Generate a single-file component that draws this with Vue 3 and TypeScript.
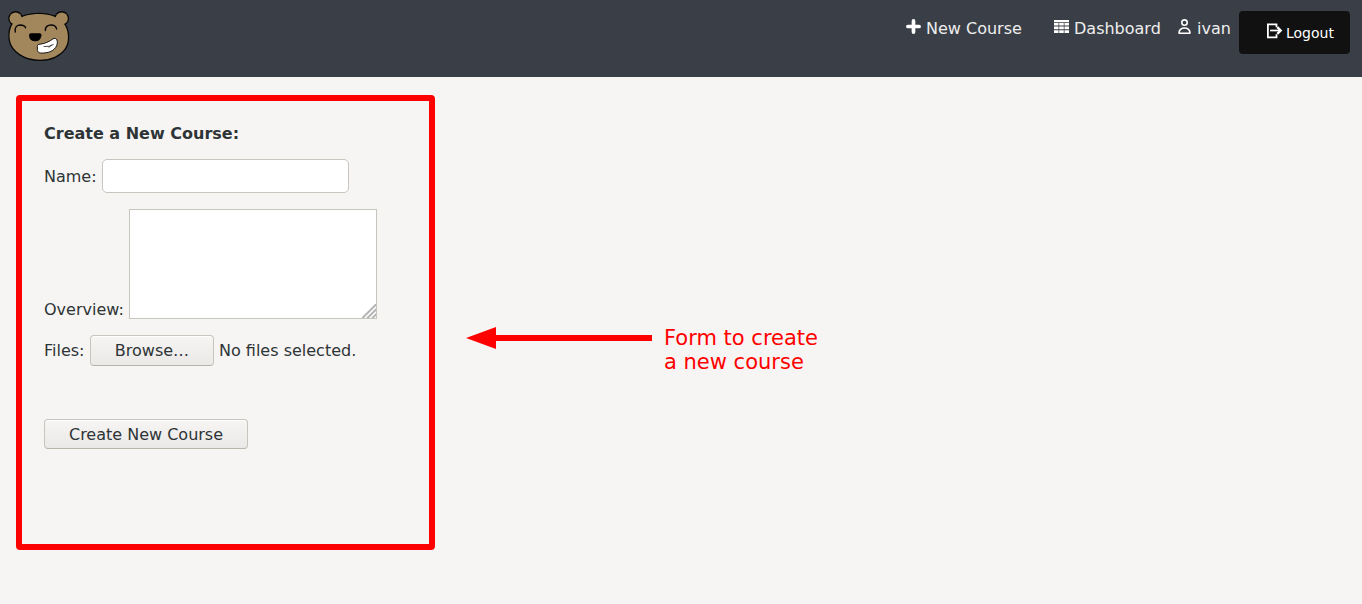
<script setup lang="ts">
import { ref } from 'vue'

const name = ref<string>('')
const overview = ref<string>('')
</script>

<template>
  <div class="page">
    <header class="bar">
      <svg class="logo" width="66" height="54" viewBox="0 0 66 54">
        <g fill="none" stroke="#080808" stroke-width="2.600">
          <circle cx="9.600" cy="10.500" r="6.100" />
          <circle cx="55.700" cy="10.500" r="6.100" />
          <path transform="translate(1.200 0)" d="M32.500 6C43 6 53 9.800 57.500 17C60 21 61.200 26 60.600 32C59.500 44 47 51.700 33 51.700C18 51.700 4 43.500 2.600 31C1.700 24 3.500 17.500 7.500 13.500C13 8.400 22 6 32.500 6Z" />
        </g>
        <g fill="#a3875c">
          <circle cx="9.600" cy="10.500" r="6.100" />
          <circle cx="55.700" cy="10.500" r="6.100" />
          <path transform="translate(1.200 0)" d="M32.500 6C43 6 53 9.800 57.500 17C60 21 61.200 26 60.600 32C59.500 44 47 51.700 33 51.700C18 51.700 4 43.500 2.600 31C1.700 24 3.500 17.500 7.500 13.500C13 8.400 22 6 32.500 6Z" />
        </g>
        <g transform="translate(1.600 0)">
          <g fill="none" stroke="#080808" stroke-width="1.400" stroke-linecap="round">
            <path d="M7.700 24C6.700 19 9.500 17 12.700 17C15.500 17.100 17.500 18 18 19.800" />
            <path d="M37.800 22.500C37.500 18.800 40 17 43.500 17C46.500 17 48.500 18.200 49 21" />
          </g>
          <path d="M21.400 27Q21.500 25.300 23.200 25.300H32Q34 25.300 33.900 27.200Q33 33.300 27.800 33.300Q21.600 33.300 21.400 27Z" fill="#000" />
          <path d="M31.500 36.300C37 35.800 42 33.500 45.500 30.800C48.500 29.500 50.200 31.500 49.600 36C48.500 41 43.500 44.800 36 45C31 45.500 29.500 44 29.800 40C29.500 37.500 30 36.400 31.500 36.300Z" fill="#fff" stroke="#111" stroke-width="1" />
          <path d="M36 38.500L41.500 38.300L46 36.400M41 39.500L44 37" fill="none" stroke="#222" stroke-width=".8" />
        </g>
      </svg>
      <nav class="links">
        <a class="link course">
          <svg class="icon" width="15" height="15" viewBox="0 0 15 15">
            <path d="M7.500 1.900V13.100M1.900 7.500H13.100" stroke="#fff" stroke-width="3.700" stroke-linecap="round" />
          </svg>
          <span>New Course</span>
        </a>
        <a class="link dashboard">
          <svg class="icon" width="15" height="15" viewBox="0 0 15 15" fill="#fff">
            <path d="M0 1H15V3.200H0ZM0 4H4.500V6.500H0ZM5.200 4H9.800V6.500H5.200ZM10.500 4H15V6.500H10.500ZM0 7.400H4.500V10.200H0ZM5.200 7.400H9.800V10.200H5.200ZM10.500 7.400H15V10.200H10.500ZM0 11.200H4.500V14H0ZM5.200 11.200H9.800V14H5.200ZM10.500 11.200H15V14H10.500Z" />
          </svg>
          <span>Dashboard</span>
        </a>
        <a class="link user">
          <svg class="icon" width="14" height="16" viewBox="0 0 14 16" fill="none" stroke="#fff" stroke-width="1.600">
            <circle cx="6.500" cy="3.600" r="2.700" />
            <path d="M1.100 14.200C.7 10.700 3.500 9 6.500 9S12.300 10.700 11.900 14.200Z" stroke-linejoin="round" />
          </svg>
          <span>ivan</span>
        </a>
        <a class="logout">
          <svg class="icon" width="17" height="16" viewBox="0 0 17 16" fill="none" stroke="#fff">
            <path d="M10.500 4.300V1.300H1.900V14.300H10.500V11.300" stroke-width="1.800" />
            <path d="M4 7.500H14.500" stroke-width="1.700" />
            <path d="M11.300 4.200L14.700 7.500L11.300 10.800" stroke-width="2.300" />
          </svg>
          <span>Logout</span>
        </a>
      </nav>
    </header>

    <main class="content">
      <form class="panel" @submit.prevent>
        <h1 class="title">Create a New Course:</h1>
        <div class="row name-row">
          <label class="label" for="name">Name:</label>
          <input id="name" v-model="name" class="field" type="text" />
        </div>
        <div class="row overview-row">
          <label class="label" for="overview">Overview:</label>
          <div class="area-wrap">
            <textarea id="overview" v-model="overview" class="area"></textarea>
            <svg class="grip" width="14" height="14" viewBox="0 0 14 14">
              <path d="M0 14.500L14.500 0M5 14.500L14.500 5M10 14.500L14.500 10" stroke="#b4b4b4" stroke-width="2" />
            </svg>
          </div>
        </div>
        <div class="row files-row">
          <span class="label">Files:</span>
          <button class="button browse" type="button">Browse…</button>
          <span class="status">No files selected.</span>
        </div>
        <button class="button create" type="submit">Create New Course</button>
      </form>
      <aside class="note">
        <svg class="arrow" width="186" height="22" viewBox="0 0 186 22" fill="#f00">
          <path d="M0 11L30 0V8H186V14H30V22Z" />
        </svg>
        <p class="caption">Form to create<br />a new course</p>
      </aside>
    </main>
  </div>
</template>

<style>
body {
  margin: 0;
  background: #f6f5f3;
}
</style>

<style scoped>
.page {
  width: 1362px;
  height: 604px;
  overflow: hidden;
  background: #f6f5f3;
  color: #2e3436;
  font: 16px/19px "DejaVu Sans", sans-serif;
  white-space: nowrap;
}
.bar {
  box-sizing: border-box;
  height: 77px;
  padding: 0 12px 0 6px;
  display: flex;
  justify-content: space-between;
  align-items: flex-start;
  background: #3a3e47;
}
.logo {
  margin-top: 8px;
}
.links {
  display: flex;
  align-items: flex-start;
  padding-top: 11px;
  color: #fff;
}
.link {
  display: flex;
  padding-top: 8px;
  color: #eee;
}
.icon {
  flex: none;
}
.course {
  width: 148px;
  gap: 5px;
}
.dashboard {
  width: 124px;
  gap: 5px;
}
.user {
  width: 61px;
  gap: 5px;
}
.logout {
  box-sizing: border-box;
  display: flex;
  gap: 3px;
  width: 111px;
  height: 43px;
  padding: 12px 0 0 27px;
  border-radius: 4px;
  background: #111;
  font-size: 14px;
}
.logout span {
  padding-top: 1px;
}
.content {
  display: flex;
  align-items: flex-start;
  padding: 18px 0 0 16px;
}
.panel {
  box-sizing: border-box;
  width: 419px;
  height: 455px;
  padding: 23px 0 0 22px;
  border: 6px solid #f00;
  border-radius: 4px;
}
.title {
  margin: 0;
  font-size: 16px;
  line-height: 19px;
  font-weight: bold;
}
.row {
  display: flex;
}
.label {
  flex: none;
}
.name-row {
  margin-top: 16px;
  height: 34px;
}
.name-row .label {
  width: 58px;
  padding-top: 8px;
}
.field {
  box-sizing: border-box;
  width: 247px;
  height: 34px;
  padding: 0 8px;
  border: 1px solid #c8c5bf;
  border-radius: 5px;
  background: #fff;
  font: inherit;
}
.overview-row {
  margin-top: 16px;
  height: 110px;
}
.overview-row .label {
  width: 85px;
  padding-top: 91px;
}
.area-wrap {
  position: relative;
  width: 248px;
  height: 110px;
}
.area {
  box-sizing: border-box;
  display: block;
  width: 248px;
  height: 110px;
  border: 1px solid #c8c5bf;
  border-radius: 0;
  background: #fff;
  font: inherit;
  resize: none;
}
.grip {
  position: absolute;
  right: 1px;
  bottom: 1px;
}
.files-row {
  margin-top: 16px;
  height: 31px;
}
.files-row .label {
  width: 46px;
  padding-top: 6px;
}
.status {
  padding: 6px 0 0 5px;
}
.button {
  box-sizing: border-box;
  padding: 0;
  border: 1px solid #c8c5bf;
  border-bottom-color: #bab5ab;
  border-radius: 4px;
  background: linear-gradient(#f6f5f3, #eae9e7);
  box-shadow: inset 0 1px #fff;
  color: #2e3436;
  font: inherit;
}
.browse {
  width: 124px;
  height: 31px;
}
.create {
  display: block;
  width: 204px;
  height: 30px;
  margin-top: 53px;
}
.note {
  display: flex;
  padding: 231px 0 0 31px;
  color: #f00;
}
.arrow {
  margin-top: 1px;
}
.caption {
  margin: 0 0 0 12px;
  font-size: 21px;
  line-height: 24px;
}
</style>
